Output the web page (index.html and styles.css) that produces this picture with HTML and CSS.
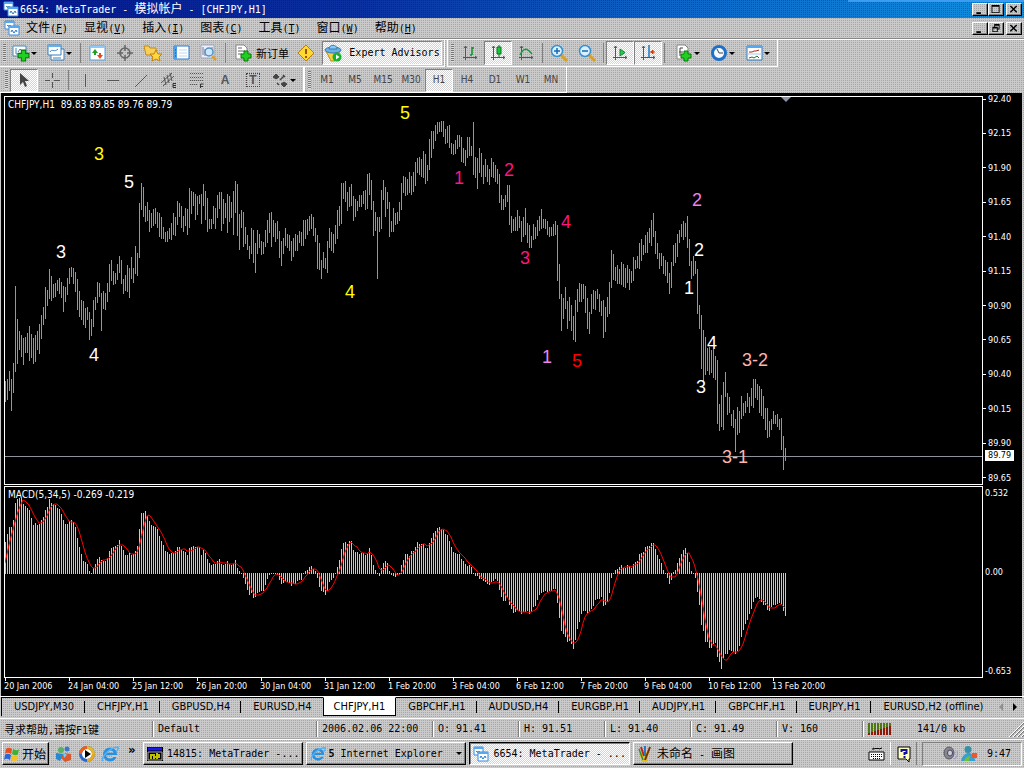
FILE: index.html
```html
<!DOCTYPE html>
<html lang="zh-CN">
<head>
<meta charset="utf-8">
<title>6654: MetaTrader - 模拟帐户 - [CHFJPY,H1]</title>
<link rel="stylesheet" href="styles.css">
</head>
<body>
<svg class="defs" aria-hidden="true">
  <symbol id="i-mt" viewBox="0 0 16 16"><path d="M1 1h9v8H1z" fill="#fff" stroke="#3a8ad8"/><path d="M1 1h9v2H1z" fill="#58a8f0"/><path d="M3 6l1-1 1 2 1-2 1 2" stroke="#48a" fill="none"/><path d="M5 6h10v9H5z" fill="#fff" stroke="#3a8ad8"/><path d="M5 6h10v2H5z" fill="#58a8f0"/><path d="M7 12l1-2 2 3 2-3 1 2" stroke="#2878c8" fill="none"/></symbol>
  <symbol id="i-plus" viewBox="0 0 12 12"><path d="M4 1h4v3h3v4H8v3H4V8H1V4h3z" fill="#20d020" stroke="#087808"/></symbol>
  <symbol id="i-ie" viewBox="0 0 18 18"><circle cx="9" cy="9.500" r="5.500" fill="none" stroke="#2890e0" stroke-width="3"/><path d="M4 9h10" stroke="#2890e0" stroke-width="2.500"/><path d="M11 12h6v-2h-6z" fill="#c8c8c8"/><path d="M2 16C-1 13 9 2 17 2c1 2-1 4-2 5" fill="none" stroke="#58b0f0" stroke-width="1.500"/></symbol>
  <symbol id="i-axes" viewBox="0 0 18 18"><path d="M4.500 2v14M2 13.500h14M3 4l1.500-2L6 4M14 12l2 1.500-2 1.500" fill="none" stroke="#555"/></symbol>
</svg>

<header class="titlebar">
  <svg class="ic16"><use href="#i-mt"/></svg>
  <h1 class="title">6654: MetaTrader - <span class="cjk">模拟帐户</span> - [CHFJPY,H1]</h1>
  <div class="winbtns">
    <button class="wbtn" aria-label="Minimize"><svg viewBox="0 0 12 10"><path d="M2 8h5v2H2z"/></svg></button>
    <button class="wbtn" aria-label="Maximize"><svg viewBox="0 0 12 10"><path d="M1 0h9v9H1zM2 2v6h7V2z" fill-rule="evenodd"/></svg></button>
    <button class="wbtn close" aria-label="Close"><svg viewBox="0 0 12 10"><path d="M2 1l7 7M9 1L2 8" stroke="#000" stroke-width="1.600"/></svg></button>
  </div>
</header>

<nav class="menubar">
  <svg class="ic16"><use href="#i-mt"/></svg>
  <button class="menu"><span class="cjk">文件</span>(<u>F</u>)</button>
  <button class="menu"><span class="cjk">显视</span>(<u>V</u>)</button>
  <button class="menu"><span class="cjk">插入</span>(<u>I</u>)</button>
  <button class="menu"><span class="cjk">图表</span>(<u>C</u>)</button>
  <button class="menu"><span class="cjk">工具</span>(<u>T</u>)</button>
  <button class="menu"><span class="cjk">窗口</span>(<u>W</u>)</button>
  <button class="menu"><span class="cjk">帮助</span>(<u>H</u>)</button>
  <div class="winbtns">
    <button class="wbtn" aria-label="Minimize chart"><svg viewBox="0 0 12 10"><path d="M2 8h5v2H2z"/></svg></button>
    <button class="wbtn" aria-label="Restore chart"><svg viewBox="0 0 12 10"><path d="M4 0h6v6H8v3H2V3h2zM5 2v1h3v2h1V2zM3 5v3h4V5z" fill-rule="evenodd"/></svg></button>
    <button class="wbtn close" aria-label="Close chart"><svg viewBox="0 0 12 10"><path d="M2 1l7 7M9 1L2 8" stroke="#000" stroke-width="1.600"/></svg></button>
  </div>
</nav>

<div class="toolrow">
  <div class="toolbar" role="toolbar" aria-label="Standard">
    <span class="grip"></span>
    <button class="tb drop" aria-label="New chart"><svg viewBox="0 0 18 18"><path d="M1 2h13v10H1z" fill="#fff" stroke="#4888b8"/><path d="M4 4v6h8M6 8l2-3 2 2" fill="none" stroke="#4888b8"/><use href="#i-plus" x="5" y="5" width="13" height="13"/></svg></button>
    <button class="tb drop" aria-label="Profiles"><svg viewBox="0 0 18 18"><path d="M4 5h13v11H4z" fill="#fff" stroke="#3880c0"/><path d="M1 1h13v10H1z" fill="#fff" stroke="#3880c0"/><path d="M1 1h13v2H1z" fill="#68b0e8"/><path d="M3 8c2-4 4 1 8-3M6 14h8" fill="none" stroke="#3880c0"/></svg></button>
    <span class="sep"></span>
    <button class="tb" aria-label="Market watch"><svg viewBox="0 0 18 18"><path d="M2 2h15v14H2z" fill="#fff" stroke="#58a0e0"/><path d="M2 2h15v2H2z" fill="#90c8f8"/><path d="M4 9l3-4 3 4H8v2H6V9z" fill="#20a020"/><path d="M9 11l3 4 3-4h-2V9h-2v2z" fill="#e84818"/></svg></button>
    <button class="tb" aria-label="Data window"><svg viewBox="0 0 18 18"><circle cx="9" cy="9" r="5" fill="none" stroke="#666" stroke-width="1.500"/><path d="M9 1v6M9 11v6M1 9h6M11 9h6" stroke="#666" stroke-width="1.500"/></svg></button>
    <button class="tb" aria-label="Navigator"><svg viewBox="0 0 18 18"><path d="M0 2h5l1 2h6v7H2z" fill="#f8d058" stroke="#c08818"/><path d="M12 6l2 4h4l-3 3 1 4-4-2-4 2 1-4-3-3h4z" fill="#ffd840" stroke="#c08010"/></svg></button>
    <button class="tb" aria-label="Terminal"><svg viewBox="0 0 18 18"><path d="M2 2h15v13H2z" fill="#fff" stroke="#2878c8"/><path d="M2 2h3v13H2z" fill="#50a0e8"/><path d="M3 6h1M3 9h1M3 12h1" stroke="#c00"/><path d="M7 6h8M7 9h8M7 12h8" stroke="#c0d8f0"/></svg></button>
    <button class="tb" aria-label="Strategy tester"><svg viewBox="0 0 18 18"><path d="M1 1h13v13H1z" fill="#eef" stroke="#9ab"/><path d="M3 3v8M5 5v7M12 3v5" stroke="#778"/><circle cx="9" cy="8" r="4" fill="#c8e8ff" stroke="#5890c0" stroke-width="1.500"/><path d="M12 12l4 4" stroke="#e0a020" stroke-width="2.500"/></svg></button>
    <span class="sep"></span>
    <button class="tb order"><svg viewBox="0 0 18 18"><path d="M2 1h8l3 3v11H2z" fill="#fff" stroke="#888"/><path d="M4 4h4M4 7h7M4 10h4" stroke="#666"/><use href="#i-plus" x="6" y="6" width="12" height="12"/></svg><span class="cjk small">新订单</span></button>
    <button class="tb" aria-label="Alerts"><svg viewBox="0 0 18 18"><path d="M9 1l8 8-8 8-8-8z" fill="#ffd830" stroke="#b88010"/><path d="M9 5v5M9 12v2" stroke="#a05008" stroke-width="2"/></svg></button>
    <button class="tb pressed expert"><svg viewBox="0 0 18 18"><path d="M2 7h14l-5 10H7z" fill="#f8d040" stroke="#b89020"/><ellipse cx="9" cy="6" rx="8" ry="3" fill="#68b0e8" stroke="#3878b0"/><path d="M5 5c0-5 8-5 8 0z" fill="#88c8f8" stroke="#3878b0"/><circle cx="13" cy="13" r="4.500" fill="#18b030"/><path d="M12 10.500l3.500 2.500-3.500 2.500z" fill="#fff"/></svg>Expert Advisors</button>
  </div>
  <div class="toolbar" role="toolbar" aria-label="Charts">
    <span class="grip"></span>
    <button class="tb" aria-label="Bar chart"><svg viewBox="0 0 18 18"><use href="#i-axes"/><path d="M9 11h2M11 3v8M11 4h2" stroke="#109030" stroke-width="1.500"/></svg></button>
    <button class="tb pressed" aria-label="Candlesticks"><svg viewBox="0 0 18 18"><use href="#i-axes"/><path d="M10 1v12" stroke="#087020"/><path d="M8 3h4v7H8z" fill="#18c838" stroke="#087020"/></svg></button>
    <button class="tb" aria-label="Line chart"><svg viewBox="0 0 18 18"><use href="#i-axes"/><path d="M3 11c4-8 7-7 12-1" fill="none" stroke="#209840" stroke-width="1.500"/></svg></button>
    <span class="sep"></span>
    <button class="tb" aria-label="Zoom in"><svg viewBox="0 0 18 18"><path d="M11 11l6 6" stroke="#d8a020" stroke-width="3"/><circle cx="7" cy="7" r="5.500" fill="#d8f0ff" stroke="#3890d0" stroke-width="1.500"/><path d="M4 7h6M7 4v6" stroke="#1868b0" stroke-width="1.500"/></svg></button>
    <button class="tb" aria-label="Zoom out"><svg viewBox="0 0 18 18"><path d="M11 11l6 6" stroke="#d8a020" stroke-width="3"/><circle cx="7" cy="7" r="5.500" fill="#d8f0ff" stroke="#3890d0" stroke-width="1.500"/><path d="M4 7h6" stroke="#1868b0" stroke-width="1.500"/></svg></button>
    <span class="sep"></span>
    <button class="tb pressed" aria-label="Auto scroll"><svg viewBox="0 0 18 18"><use href="#i-axes"/><path d="M9 5l5 3.500L9 12z" fill="#30c850" stroke="#108030"/></svg></button>
    <button class="tb pressed" aria-label="Chart shift"><svg viewBox="0 0 18 18"><use href="#i-axes"/><path d="M10 1v12" stroke="#1878c0" stroke-width="1.500"/><path d="M11 8h5M14 6l-2 2 2 2z" fill="#c84010" stroke="#c84010"/></svg></button>
    <span class="sep wide"></span>
    <button class="tb drop" aria-label="Indicators"><svg viewBox="0 0 18 18"><path d="M2 1h8l3 3v11H2z" fill="#fff" stroke="#888"/><path d="M5 12V4h3M4 8h4" fill="none" stroke="#444"/><use href="#i-plus" x="5" y="6" width="12" height="12"/></svg></button>
    <button class="tb drop" aria-label="Periods"><svg viewBox="0 0 18 18"><circle cx="9" cy="9" r="6.500" fill="#f4faff" stroke="#2070c8" stroke-width="3"/><path d="M7 5l2 4h4" fill="none" stroke="#444"/></svg></button>
    <button class="tb drop" aria-label="Templates"><svg viewBox="0 0 18 18"><path d="M2 2h15v14H2z" fill="#fff" stroke="#2878c8"/><path d="M2 2h15v2H2z" fill="#58a8f0"/><path d="M4 8h3l2-1h2l3-1" fill="none" stroke="#b02010"/><path d="M2 10h15" stroke="#a8c8e8"/><path d="M4 14l3-1 2 1 3-2 2 2" fill="none" stroke="#108020"/></svg></button>
  </div>
</div>

<div class="toolrow lower">
  <div class="toolbar" role="toolbar" aria-label="Line studies">
    <span class="grip first"></span>
    <button class="tb pressed" aria-label="Cursor"><svg viewBox="0 0 18 18"><path d="M5 2v12l3-3 2 5 2-1-2-5h4z" fill="#444"/></svg></button>
    <button class="tb" aria-label="Crosshair"><svg viewBox="0 0 18 18"><path d="M9.500 2v5M9.500 11v6M2 9.500h5M11 9.500h6" stroke="#555"/></svg></button>
    <span class="sep"></span>
    <button class="tb" aria-label="Vertical line"><svg viewBox="0 0 18 18"><path d="M9.500 3v13" stroke="#555"/></svg></button>
    <button class="tb" aria-label="Horizontal line"><svg viewBox="0 0 18 18"><path d="M3 9.500h12" stroke="#555"/></svg></button>
    <button class="tb" aria-label="Trendline"><svg viewBox="0 0 18 18"><path d="M3 16L15 4" stroke="#555"/></svg></button>
    <button class="tb" aria-label="Channel"><svg viewBox="0 0 18 18"><path d="M1 12L12 2M3 15L14 5M4 6l2 8M7 4l2 8M10 2l2 8" stroke="#555"/><path d="M16 12.500h-3v4h3M13 14.500h3" fill="none" stroke="#333"/></svg></button>
    <button class="tb" aria-label="Fibonacci"><svg viewBox="0 0 18 18"><path d="M2 2.500h13M2 6.500h13M2 9.500h13M2 13.500h8" stroke="#555" stroke-dasharray="1 1"/><path d="M12.500 17v-4h3M12 15.500h3" fill="none" stroke="#333"/></svg></button>
    <button class="tb letter">A</button>
    <button class="tb letter"><span class="boxed">T</span></button>
    <button class="tb drop" aria-label="Arrows"><svg viewBox="0 0 18 18"><path d="M5 3l3 3-3 2-3-2zM13 11l3 2-3 3-3-3z" fill="#444" stroke="#444"/><path d="M6 12l2 2M9 9l4-4M12 4l2 2" stroke="#444" stroke-width="1.500"/></svg></button>
  </div>
  <div class="toolbar" role="toolbar" aria-label="Timeframes">
    <span class="grip"></span>
    <button class="tb tf">M1</button><button class="tb tf">M5</button><button class="tb tf">M15</button><button class="tb tf">M30</button><button class="tb tf pressed">H1</button><button class="tb tf">H4</button><button class="tb tf">D1</button><button class="tb tf">W1</button><button class="tb tf">MN</button>
  </div>
</div>

<main class="chart">
  <section class="pane">
    <p class="legend">CHFJPY,H1&nbsp; 89.83 89.85 89.76 89.79</p>
    <svg class="plot">
      <path d="M776 0h10l-5 5z" fill="#8c93a8"/>
      <rect x="0" y="359" width="100%" height="1" fill="#8c939c"/>
      <path id="bars" class="bars" transform="translate(0 -2)"/>
      <g class="waves">
        <g class="w-yellow"><text x="89" y="63">3</text><text x="395" y="22">5</text><text x="340" y="201">4</text></g>
        <g class="w-white"><text x="119" y="91">5</text><text x="51" y="161">3</text><text x="84" y="264">4</text><text x="689" y="159">2</text><text x="679" y="197">1</text><text x="702" y="252">4</text><text x="691" y="296">3</text></g>
        <g class="w-pink"><text x="449" y="87">1</text><text x="499" y="79">2</text><text x="515" y="167">3</text><text x="556" y="131">4</text></g>
        <g class="w-violet"><text x="537" y="266">1</text><text x="687" y="109">2</text></g>
        <g class="w-red"><text x="567" y="270">5</text></g>
        <g class="w-rose"><text x="737" y="269">3-2</text><text x="717" y="366">3-1</text></g>
      </g>
    </svg>
  </section>
  <div class="axis">
    <ol class="prices"><li>92.40</li><li>92.15</li><li>91.90</li><li>91.65</li><li>91.40</li><li>91.15</li><li>90.90</li><li>90.65</li><li>90.40</li><li>90.15</li><li>89.90</li><li>89.65</li></ol>
    <span class="bid">89.79</span>
  </div>
  <section class="pane">
    <p class="legend">MACD(5,34,5) -0.269 -0.219</p>
    <svg class="plot"><path id="hist" class="hist"/><polyline id="signal" class="signal"/></svg>
  </section>
  <div class="axis">
    <ol class="levels"><li>0.532</li><li>0.00</li><li>-0.653</li></ol>
  </div>
  <ol class="times"><li>20 Jan 2006</li><li>24 Jan 04:00</li><li>25 Jan 12:00</li><li>26 Jan 20:00</li><li>30 Jan 04:00</li><li>31 Jan 12:00</li><li>1 Feb 20:00</li><li>3 Feb 04:00</li><li>6 Feb 12:00</li><li>7 Feb 20:00</li><li>9 Feb 04:00</li><li>10 Feb 12:00</li><li>13 Feb 20:00</li></ol>
</main>

<nav class="tabs">
  <button class="tab">USDJPY,M30</button><button class="tab">CHFJPY,H1</button><button class="tab">GBPUSD,H4</button><button class="tab before">EURUSD,H4</button><button class="tab active">CHFJPY,H1</button><button class="tab">GBPCHF,H1</button><button class="tab">AUDUSD,H4</button><button class="tab">EURGBP,H1</button><button class="tab">AUDJPY,H1</button><button class="tab">GBPCHF,H1</button><button class="tab">EURJPY,H1</button><button class="tab last">EURUSD,H2 (offline)</button>
  <button class="scroll off" aria-label="Previous tabs"><svg viewBox="0 0 6 8"><path d="M5 0v8L1 4z"/></svg></button>
  <button class="scroll" aria-label="Next tabs"><svg viewBox="0 0 6 8"><path d="M1 0v8l4-4z"/></svg></button>
</nav>

<footer class="status">
  <span class="cell"><span class="cjk small">寻求帮助</span>,<span class="cjk small">请按</span>F1<span class="cjk small">键</span></span>
  <span class="cell">Default</span>
  <span class="cell">2006.02.06 22:00</span>
  <span class="cell">O: 91.41</span><span class="cell">H: 91.51</span><span class="cell">L: 91.40</span><span class="cell">C: 91.49</span><span class="cell">V: 160</span>
  <span class="cell conn">
    <svg class="signalbars" viewBox="0 0 24 12"><path d="M0 0h2v10H0zM3 0h2v9H3zM6 0h2v8H6zM9 0h2v7H9zM12 0h2v6h-2zM15 0h2v5h-2zM18 0h2v4h-2zM21 0h2v3h-2z" fill="#507810"/><path d="M0 10h2v2H0zM3 9h2v3H3zM6 8h2v4H6zM9 7h2v5H9zM12 6h2v6h-2zM15 5h2v7h-2zM18 4h2v8h-2zM21 3h2v9h-2z" fill="#901808"/></svg>
    141/0 kb
    <svg class="sizer" viewBox="0 0 15 15"><path d="M0 15L15 0M4 15L15 4M8 15l7-7M12 15l3-3" stroke="#fff"/><path d="M1 15L15 1M5 15L15 5M9 15l6-6M13 15l2-2" stroke="#777"/></svg>
  </span>
</footer>

<div class="taskbar">
  <button class="start"><svg class="ic16" viewBox="0 0 16 16"><path d="M2 3c2-2 4-1 6 0L7 8C5 7 3 6 1 8z" fill="#e85020"/><path d="M9 3c2 1 4 2 6 0l-1 5c-2 2-4 1-6 0z" fill="#40b030"/><path d="M1 9c2-2 4-1 6 0l-1 5c-2-1-4-2-6 0z" fill="#2868d8"/><path d="M8 9c2 1 4 2 6 0l-1 5c-2 2-4 1-6 0z" fill="#f8c020"/></svg><span class="cjk">开始</span></button>
  <div class="quick">
    <svg viewBox="0 0 18 18"><circle cx="6" cy="5" r="3" fill="#58b060"/><circle cx="12" cy="4" r="2.500" fill="#3878c8"/><path d="M1 8l8 1-4 7-4-2z" fill="#2888d0"/><path d="M9 8l7 1v6l-6 2-4-4z" fill="#d85830"/><path d="M8 7l4 3-3 3z" fill="#80c8f0"/></svg>
    <svg viewBox="0 0 18 18"><circle cx="9" cy="9" r="6.500" fill="#fff" stroke="#2868c8" stroke-width="3"/><path d="M2.500 9A6.500 6.500 0 0 1 9 2.500" fill="none" stroke="#e86020" stroke-width="3"/><path d="M9 2.500A6.500 6.500 0 0 1 15.500 9" fill="none" stroke="#e8b820" stroke-width="3"/><path d="M15.500 9A6.500 6.500 0 0 1 9 15.500" fill="none" stroke="#e8a820" stroke-width="3"/><path d="M7 5l6 4-6 4z"/></svg>
    <svg viewBox="0 0 18 18"><use href="#i-ie"/></svg>
    <span class="more">»</span>
  </div>
  <div class="tasks">
    <button class="task"><svg class="ic16" viewBox="0 0 16 16"><path d="M0 1h16v14H0z"/><path d="M1 3h14" stroke="#1818e8" stroke-width="3"/><path d="M1 6h14v8H1z" stroke="#aaa"/><path d="M4 8v5M7 8v5M10 7v6M12 8v4M5 9h1M8 11h1" stroke="#ff0" stroke-width="1.500"/></svg>14815: MetaTrader -...</button>
    <button class="task"><svg class="ic16" viewBox="0 0 18 18"><use href="#i-ie"/></svg><span><b>5</b> Internet Explorer</span><span class="caret"></span></button>
    <button class="task current"><svg class="ic16"><use href="#i-mt"/></svg>6654: MetaTrader - ...</button>
    <button class="task"><svg class="ic16" viewBox="0 0 16 16"><path d="M2 6h10l-2 10H5z" fill="#e8c020"/><path d="M4 1l3 9" stroke="#c82010" stroke-width="2"/><path d="M8 0v10" stroke="#2878c8" stroke-width="2"/><path d="M13 1L8 14" stroke="#703010" stroke-width="2"/><path d="M2 3l4 11" stroke="#309030" stroke-width="1.500"/></svg><span><span class="cjk">未命名</span> - <span class="cjk">画图</span></span></button>
  </div>
  <div class="lang">
    <svg viewBox="0 0 18 18"><path d="M1 7h15v8H1z" fill="#fff" stroke="#000"/><path d="M3 9.500h12M3 11.500h12M5 13.500h8" stroke="#000" stroke-dasharray="1 1"/><path d="M5 5V3l2 1 1-1 1 1 1-1 1 1 3-1" fill="none" stroke="#000"/></svg>
    <span class="vsep"></span>
    <svg viewBox="0 0 18 18"><path d="M3 2h12v12h-1v3l-3-3H3z" fill="#ffffc0" stroke="#000"/><path d="M6.500 7V5h5v3H9.500v2M9.500 11v2" fill="none" stroke="#1010a0" stroke-width="2"/></svg>
  </div>
  <div class="tray">
    <svg viewBox="0 0 18 18"><ellipse cx="8" cy="8" rx="5" ry="6" fill="#888" stroke="#556"/><ellipse cx="9" cy="8" rx="2.500" ry="3" fill="#ccd" stroke="#446"/><path d="M13 14c3-1 4-5 3-8" fill="none" stroke="#9090d8"/></svg>
    <svg viewBox="0 0 18 18"><circle cx="8" cy="4.500" r="3.500" fill="#3890a8"/><path d="M1 16c1-5 5-9 9-8 4 2 5 5 5 8z" fill="#38a0d0"/><path d="M4 16c2-4 4-5 6-5l-1 5z" fill="#70c040"/><path d="M12 8h5v5h-5z" fill="#e85830"/></svg>
    <time>9:47</time>
  </div>
</div>
<script src="chart.js"></script>
</body>
</html>
```

FILE: styles.css
```css
:root {
  --face: #cacaca;
  --dot: #a6a6a6;
  --dither: conic-gradient(var(--dot) 25%, var(--face) 0) 0 0 / 2px 2px;
  --light: conic-gradient(#fff 25%, #d4d4d4 0 50%, #fff 0 75%, #d4d4d4 0) 0 0 / 2px 2px;
  --mono: "DejaVu Sans Mono", "Liberation Mono", "Noto Sans CJK SC", monospace;
  --ui: "DejaVu Sans Condensed", "DejaVu Sans", sans-serif;
}
* { box-sizing: border-box; }
html { height: 100%; }
body {
  margin: 0;
  min-height: 100%;
  display: flex;
  flex-direction: column;
  background: var(--dither);
  font: 10px/14px var(--mono);
  color: #000;
  overflow-x: hidden;
}
button { font: inherit; color: inherit; background: none; border: 0; padding: 0; margin: 0; white-space: nowrap; }
ol { list-style: none; margin: 0; padding: 0; }
svg { display: block; flex: none; }
.defs { position: absolute; width: 0; height: 0; }
.cjk { font-family: "Noto Sans CJK SC", sans-serif; font-size: 12px; }
.cjk.small { font-size: 11px; }
.ic16 { width: 16px; height: 16px; }

.titlebar {
  display: flex;
  align-items: center;
  height: 18px;
  padding: 0 2px 0 3px;
  background:
    linear-gradient(#3c9cf0, #3c9cf0) 100% 0 / 176px 2px no-repeat,
    conic-gradient(rgba(0, 0, 70, .25) 25%, transparent 0) 0 0 / 2px 2px,
    linear-gradient(90deg, #06188c, #0a30a0 35%, #0c64c8 65%, #1090e0);
  color: #fff;
}
.title { margin: 0 0 0 1px; font: inherit; flex: 1; white-space: nowrap; }
.winbtns { display: flex; margin-left: auto; }
.wbtn {
  width: 16px;
  height: 13px;
  padding: 1px;
  background: var(--dither);
  border: 1px solid;
  border-color: #fff #000 #000 #fff;
  box-shadow: inset -1px -1px #808080;
}
.wbtn svg { width: 12px; height: 9px; }
.wbtn.close { margin-left: 2px; }

.menubar { display: flex; align-items: center; height: 21px; padding: 0 2px 0 4px; border-bottom: 1px solid #888; }
.menubar .ic16 { margin-right: -2px; }
.menu { padding: 0 8px; line-height: 18px; }

.toolrow { display: flex; height: 28px; border-top: 1px solid #fff; }
.toolbar { display: flex; align-items: center; height: 27px; border-right: 1px solid #fff; border-bottom: 1px solid #fff; padding-right: 1px; }
.toolbar + .toolbar { border-left: 1px solid #fff; margin-left: 2px; }
.toolrow.lower { height: 26px; border-top: 0; }
.lower .toolbar { height: 26px; padding-top: 1px; }
.lower .toolbar + .toolbar { margin-left: 0; }
.grip { width: 3px; height: 18px; margin: 0 2px 0 3px; background: repeating-linear-gradient(#777 0 1px, #ddd 1px 2px); }
.grip.first { margin: 0 2px 0 5px; }
.sep { width: 1px; height: 20px; margin: 0 2px; background: #808080; }
.sep.wide { margin-right: 6px; }
.tb { display: flex; align-items: center; justify-content: center; width: 28px; height: 24px; }
.lower .tb { height: 23px; }
.tb svg { width: 18px; height: 18px; }
.tb.pressed { border: 1px solid; border-color: #808080 #fff #fff #808080; background: var(--light); background-clip: padding-box; }
.tb.drop { width: 35px; justify-content: flex-start; padding-left: 4px; }
.tb.drop::after { content: ""; border: 3px solid transparent; border-top-color: #000; border-bottom: 0; margin-left: 1px; }
.tb.order { width: auto; padding: 0 3px 0 6px; gap: 4px; }
.tb.expert { width: 120px; gap: 7px; margin-left: 2px; margin-right: 1px; }
.tb.tf { font: 10px/12px var(--ui); color: #444; }
.tb.letter { font: bold 12px/14px "Liberation Sans", sans-serif; color: #555; }
.boxed { border: 1px dotted #444; padding: 0 2px; line-height: 12px; }

.chart {
  flex: 1;
  display: grid;
  grid-template-columns: 1fr 39px;
  grid-template-rows: 388fr 193fr 18px;
  margin: 0 2px 0 1px;
  padding: 3px 0 0 3px;
  background: #000;
  color: #fff;
  font: 9px/10px var(--ui);
}
.pane { position: relative; border: 1px solid #fff; min-width: 0; min-height: 0; overflow: hidden; }
.pane + .axis + .pane { margin-top: 1px; }
.plot { width: 100%; height: 100%; }
.legend { position: absolute; left: 3px; top: 2px; margin: 0; white-space: nowrap; font-size: 10px; line-height: 12px; }
.bars { fill: #00ff00; }
.hist { fill: #c8c8c8; }
.signal { fill: none; stroke: #f00; stroke-width: 1; }
.waves { font: 18px "Liberation Sans", Arial, sans-serif; }
.w-yellow { fill: #ff0; }
.w-white { fill: #fff; }
.w-pink { fill: #ff1480; }
.w-violet { fill: #ee82ee; }
.w-red { fill: #f00; }
.w-rose { fill: #ffb4ac; }
.axis { position: relative; min-height: 0; }
.prices { display: flex; flex-direction: column; justify-content: space-between; height: 100%; margin-top: -2px; }
.prices li { display: flex; align-items: center; gap: 2px; }
.prices li::before { content: ""; width: 3px; height: 1px; background: #fff; }
.levels { display: grid; grid-template-rows: 79fr 99fr 10px; height: 100%; padding: 3px 0 2px 2px; }
.bid { position: absolute; left: 2px; top: 354px; width: 29px; padding-left: 3px; line-height: 11px; background: #fff; color: #000; }
.times { grid-column: 1 / -1; display: flex; }
.times li { position: relative; flex: 0 0 64px; padding-top: 3px; white-space: nowrap; }
.times li::before { content: ""; position: absolute; left: 1px; top: 0; width: 1px; height: 3px; background: #fff; }

.tabs { display: flex; height: 22px; padding: 0 2px 4px 1px; border-top: 1px solid #fff; font: 11px/16px var(--ui); }
.tab { position: relative; flex: 0 1 auto; border-top: 1px solid #000; padding: 0 11px 1px 12px; height: 19px; }
.tab::after { content: ""; position: absolute; right: 0; top: 3px; width: 1px; height: 12px; background: #000; }
.tab:first-child { border-left: 1px solid #000; }
.tab.active { background: #fff; border: 1px solid #000; border-top-color: #fff; padding: 0 10px; }
.tab.before::after, .tab.active::after, .tab.last::after { display: none; }
.tab.last { flex-grow: 1; text-align: left; }
.scroll { width: 17px; border-top: 1px solid #000; height: 19px; display: flex; align-items: center; justify-content: center; }
.scroll svg { width: 6px; height: 8px; }
.scroll.off { color: #909090; fill: #909090; }

.status {
  display: grid;
  grid-template-columns: 153fr 164fr 116fr 86fr 86fr 86fr 86fr 86fr 161fr;
  align-items: center;
  height: 21px;
  border-top: 1px solid #fff;
}
.cell { height: 16px; line-height: 16px; padding-left: 4px; border-left: 1px solid #fff; box-shadow: -1px 0 #808080; white-space: nowrap; }
.cell:first-child { border-left: 0; box-shadow: none; }
.conn { display: flex; align-items: center; gap: 25px; }
.signalbars { width: 24px; height: 12px; }
.sizer { width: 15px; height: 15px; margin-left: auto; }

.taskbar { display: flex; align-items: center; height: 29px; padding: 1px 2px 2px; border-top: 1px solid #fff; box-shadow: 0 -1px #a8a8a8; }
.start, .task {
  display: flex;
  align-items: center;
  height: 23px;
  border: 1px solid;
  border-color: #fff #000 #000 #fff;
  box-shadow: inset -1px -1px #808080;
  padding: 0 3px;
}
.start { width: 47px; padding: 0 1px; gap: 2px; }
.quick { display: flex; align-items: center; gap: 5px; padding: 0 4px 0 6px; width: 94px; }
.quick svg, .lang svg, .tray svg { width: 18px; height: 18px; }
.more { font: bold 13px/13px var(--ui); margin-top: -8px; margin-left: 4px; }
.tasks { flex: 1; display: flex; gap: 3px; }
.task { flex: 0 1 160px; gap: 4px; }
.task:nth-child(2) { gap: 2px; }
.caret { margin-left: auto; border: 3px solid transparent; border-top-color: #000; border-bottom: 0; }
.task.current { border-color: #000 #fff #fff #000; box-shadow: inset 1px 1px #808080; background: var(--light); }
.lang { display: flex; align-items: center; gap: 4px; padding-right: 3px; border-right: 1px solid #808080; margin-right: 5px; }
.vsep { width: 1px; height: 23px; background: #fff; }
.tray { display: flex; align-items: center; gap: 1px; width: 100px; height: 24px; border: 1px solid; border-color: #808080 #fff #fff #808080; padding-left: 18px; }
.tray time { margin-left: 8px; }
```

FILE: chart.js
```js
// Price bars as "high low" pairs; every bar is 1px wide on a 2px pitch.
const priceRuns = [
  [0, `286 307 284 305 276 296 284 316 268 298 191 277 224 269 236 255 240 262 243 270 242 258 238 258 231 266 239 263 243 269 240 267 236 255 229 259 220 244 212 230
    192 224 195 211 174 204 181 206 189 203 188 202 185 196 183 199 187 203 191 217 192 207 183 200 173 189 172 182 173 189 177 197 184 215 196 222 205 225 206 230
    213 233 212 225 217 245 224 241 205 232 202 215 187 208 188 202 198 236 196 214 198 215 188 207 169 197 165 186 176 190 178 189 169 185 161 178 165 189 184 199
    180 196 170 197 173 203 162 184 173 188 151 179 158 181 108 163 88 115 92 122 111 127 107 126 115 137 118 133 114 131 113 129 117 133 118 142 122 144 132 144
    137 147 136 147 133 144 128 145 118 140 122 141 106 130 108 122 111 133 121 137 113 131 114 140 93 133 96 119 97 111 99 125 101 120 100 109 99 129 89 111
    96 125 103 137 124 134 124 134 111 129 113 134 100 123 97 114 97 136 104 129 108 123 99 138 101 127 107 123 96 140 86 118 89 141 119 155 115 133 117 152
    132 149 140 155 151 164 133 159 135 168 148 178 135 159 139 153 146 160 147 159 135 152 125 148 118 138`],
  [133, `117 152 125 142 128 147 126 144 136 163 146 171 143 159 133 151 139 153 140 156 146 166 143 162 139 156 140 156 136 148 137 151 125 151 125 144 124 140 121 136
    119 134 122 141 133 147 140 174 148 175 165 184 157 173 163 174 146 178 133 153 137 156 139 158 130 149 115 144 111 131 88 129 88 104 86 107 97 116 92 112
    89 111 101 126 104 122 106 116 100 112 100 112 96 109 95 115 79 114 78 100 85 115 106 141 117 136 122 184 122 137 95 134 85 105 92 122 97 114 107 142
    126 137 113 137 118 130 117 129 107 126 88 115 81 98 82 101 84 100 77 98 81 100 77 97 67 91 63 78 62 80 64 82 56 83 59 89 70 86 44 75
    36 63 36 54 30 46 27 39 27 37 26 37 26 42 34 49 31 48 30 53 48 59 49 60 45 59 40 54 40 52 42 67 53 68 55 71 42 63 42 61
    51 61 27 80 62 83 63 94 53 78 58 82 70 89 64 82 70 87 74 90 63 82 67 83 70 87 74 89 79 108 100 115 104 115 100 112 90 107 90 130
    121 138 124 136 122 136 115 136 121 133 126 147 122 142 113 140 128 148 130 153`],
  [263, `141 153 129 145 132 144 125 141 121 136 114 134 124 133 124 134 126 140 132 142 132 141 129 141 126 140 130 186 169 204 199 236 203 224 192 214 206 234 202 226
    210 236 221 245 205 247 194 217 188 207 189 207 189 204 191 218 203 234 217 239 199 219 195 214 196 215 194 204 199 217 206 221 205 243 212 237 202 222 187 219
    155 193 159 185 172 186 170 189 174 189 167 190 169 192 173 193 170 188 174 195 176 188 162 186 165 174 161 173 148 174 144 166 150 160 140 158 137 158 133 148
    125 151 118 142 136 159 148 164 158 174 158 171 161 179 165 181 167 188 178 199 167 193 150 171 148 168 139 162 135 148 129 142 126 145 128 142 121 153 144 171
    166 184 161 181 166 179 174 219 210 234 220 274 235 286 242 280 253 276 252 280 255 278 254 283 261 285 265 329 309 336 300 332 287 335 277 302 298 320 302 318
    319 331 315 333 324 357 312 340 316 338 301 324 308 321 306 318 298 312 302 318 293 311 284 313 284 303 289 305 291 318 294 321 301 324 313 335 313 343 326 342
    324 335 316 329 320 329 319 332 324 335 323 355 341 375 353 366`]
];

// MACD histogram heights, positive above the zero line.
const macdRuns = [
  [0, `31 39 46 46 53 70 74 75 75 69 67 65 63 55 48 50 48 49 53 56 63 66 74 70 69 68 65 64 59 53 49 49 52 53 51 46 35 26 19 12 11 9 2 0 5 9 14 16 13 12 12 15 22 25 26 27 28 33 27 23
    18 18 20 18 19 22 27 44 60 60 62 57 52 48 47 46 44 37 32 28 22 21 19 20 20 22 26 26 23 22 21 18 25 26 27 26 26 26 18 23 20 14 10 8 9 9 12 14 9 8 9 12 9 8 9 13 5 2 0
    -5 -11 -17 -22 -20 -25 -24 -20 -19 -18 -18 -12 -6`],
  [132, `-2 -1 0 0 -2 -7 -11 -10 -8 -9 -10 -13 -11 -11 -8 -7 -7 -1 2 3 6 7 4 2 -5 -14 -18 -19 -22 -18 -9 -7 -5 -1 6 13 24 30 31 29 32 32 23 21 21 19 20 20 18 20 25 18 8 3 0 -3 5 10 12 10
    2 -2 -3 -4 -2 0 8 13 19 19 17 22 22 26 31 29 29 29 25 25 30 35 40 42 45 46 44 43 39 38 32 26 21 20 19 19 14 12 9 7 8 6 0 -3 -3 -6 -6 -8 -9 -11 -12 -9 -8 -6 -8
    -17 -24 -28 -28 -25 -32 -36 -40 -39 -37 -38 -41 -39 -39 -38 -41`],
  [263, `-39 -34 -33 -27 -22 -20 -19 -18 -19 -18 -18 -16 -16 -30 -45 -58 -61 -64 -69 -68 -71 -76 -67 -56 -49 -41 -38 -38 -41 -39 -36 -33 -27 -26 -26 -24 -33 -32 -29 -20 -5 0 3 4 6 8 5 5 8 7
    5 9 11 12 19 20 21 26 27 27 30 30 24 18 14 10 3 0 -5 -11 -7 1 3 10 15 19 23 25 20 11 2 0 -5 -19 -32 -52 -58 -69 -69 -75 -75 -71 -70 -84 -89 -96 -86 -81 -81 -77
    -78 -79 -81 -78 -73 -64 -57 -51 -47 -41 -36 -29 -25 -24 -26 -29 -32 -32 -37 -38 -34 -32 -32 -31 -30 -32 -38 -43`]
];

const numbers = text => text.trim().split(/\s+/).map(Number);
const PITCH = 2;
const ZERO = 86;

let bars = '';
for (const [start, text] of priceRuns) {
  const v = numbers(text);
  for (let i = 0; i < v.length; i += 2) {
    bars += `M${(start + i / 2) * PITCH} ${v[i]}h1V${v[i + 1]}h-1z`;
  }
}
document.getElementById('bars').setAttribute('d', bars);

const macd = [];
for (const [start, text] of macdRuns) {
  numbers(text).forEach((v, i) => { macd[start + i] = v; });
}
let hist = '';
const line = [];
const lead = [-6, 1, 8, 18];
macd.forEach((v, i) => {
  const x = i * PITCH;
  hist += v >= 0 ? `M${x} ${ZERO - v}h1V${ZERO + 1}h-1z` : `M${x} ${ZERO}h1V${ZERO - v}h-1z`;
  let sum = 0;
  for (let k = i - 4; k <= i; k++) sum += k < 0 ? lead[k + 4] : macd[k] || 0;
  line.push(`${x},${ZERO - Math.round(sum / 5)}`);
});
document.getElementById('hist').setAttribute('d', hist);
document.getElementById('signal').setAttribute('points', line.join(' '));
```
